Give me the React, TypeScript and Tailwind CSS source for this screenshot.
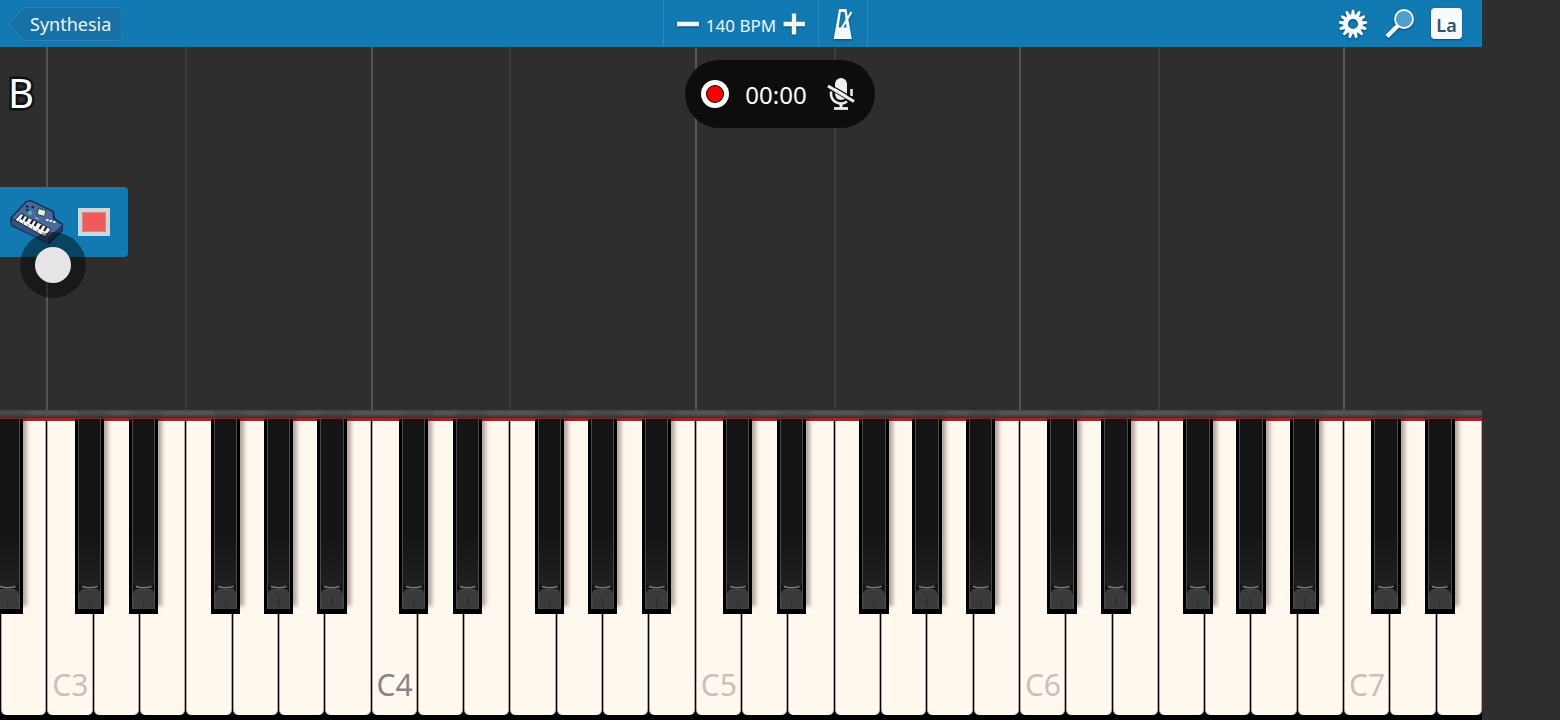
import React from "react";

const NATURALS = ["C", "D", "E", "F", "G", "A", "B"];

const SHARP_OFFSET: Record<string, string> = {
  C: "left-[60%]",
  D: "left-[77%]",
  F: "left-[54%]",
  G: "left-[69%]",
  A: "left-[85%]",
};

// 32 naturals, B2 up to E7
const KEYS = Array.from({ length: 32 }, (_, i) => {
  const step = i + 6;
  return { note: NATURALS[step % 7], octave: 2 + Math.floor(step / 7) };
});

const TEETH = Array.from({ length: 13 }, (_, i) => (i * 360) / 13);

function GearIcon() {
  return (
    <svg viewBox="0 0 32 32" className="size-8 drop-shadow-[0_1px_1px_rgba(0,0,0,0.4)]" aria-hidden="true">
      <g fill="#f6f9fb">
        {TEETH.map((a) => (
          <path key={a} d="M13.8 8 L14.8 2.2 Q16 0.8 17.2 2.2 L18.2 8 Z" transform={`rotate(${a} 16 16)`} />
        ))}
      </g>
      <circle cx="16" cy="16" r="7.4" fill="none" stroke="#f6f9fb" strokeWidth="4.6" />
    </svg>
  );
}

function SearchIcon() {
  return (
    <svg viewBox="0 0 32 32" className="size-8 drop-shadow-[0_1px_1px_rgba(0,0,0,0.4)]" aria-hidden="true">
      <path d="M14.5 17 L3 28.5" stroke="#f6f9fb" strokeWidth="4.4" />
      <circle cx="20" cy="11" r="9" fill="#4f9fcb" stroke="#f6f9fb" strokeWidth="1.8" />
    </svg>
  );
}

function MetronomeIcon() {
  return (
    <svg viewBox="0 0 24 32" className="h-8 w-6 drop-shadow-[0_1px_1px_rgba(0,0,0,0.4)]" aria-hidden="true">
      <path d="M8 1 H15.5 L20.8 31 H2.7 Z" fill="#f6f9fb" />
      <path d="M9.8 4 H13.6 L15.6 19.5 H7.6 Z" fill="#117ab2" />
      <path d="M10.5 20.5 L20.5 4" stroke="#f6f9fb" strokeWidth="2.2" />
    </svg>
  );
}

function MicOffIcon() {
  return (
    <svg viewBox="0 0 28 34" className="h-[34px] w-7" aria-hidden="true">
      <rect x="8" y="1" width="12" height="22" rx="6" fill="#ededed" />
      <path d="M4 14.5 V16 A10 10 0 0 0 20 24.500" fill="none" stroke="#ededed" strokeWidth="2.6" />
      <path d="M24.500 12 V19" stroke="#ededed" strokeWidth="2.600" />
      <path d="M14 26 V31" stroke="#ededed" strokeWidth="3" />
      <path d="M7 31.500 H21" stroke="#ededed" strokeWidth="2.800" />
      <path d="M0 10.500 L27.500 26.500" stroke="#0d0d0d" strokeWidth="1.400" />
      <path d="M1 6.500 L28 22" stroke="#0d0d0d" strokeWidth="1.400" />
      <path d="M1 9 L27 24.500" stroke="#ededed" strokeWidth="3.200" />
    </svg>
  );
}

function KeyboardIcon() {
  return (
    <svg viewBox="0 0 54 46" className="h-[46px] w-[54px]" aria-hidden="true">
      <path d="M0 19 L16 2 L21 1 L44 12 L45 19 L53 25 V32 L39 45 L1 27 Z" fill="#172c4c" />
      <path d="M2 19 L17 3 L21 2.5 L42.5 13 L43 20 L52 26 L38 39 Z" fill="#47699b" />
      <path d="M2 20 L38 39 V44 L2 26 Z" fill="#34527f" />
      <path d="M38 39 L52 27 V31 L38 44 Z" fill="#263f68" />
      <path d="M11 14.5 L41 30 L35 38 L5 21 Z" fill="#f4f4f0" stroke="#172c4c" strokeWidth="1" />
      <path
        d="M14 16.5 L11.500 20.500 M18 18.500 L15.500 22.500 M23 21 L20.500 25 M27 23 L24.500 27 M32 26 L29.500 30 M36.500 28 L34 32"
        stroke="#1a1d28"
        strokeWidth="2.200"
      />
      <path d="M9.500 20.500 L8.500 23 M14 23 L13 25.500 M18.500 25 L17.500 28 M23 28 L22 30.500 M28 30.500 L27 33 M33 33 L32 35.500" stroke="#5b6272" strokeWidth="0.800" />
      <path d="M28.500 9.500 L36 11.500 L34.500 17.500 L27 15.500 Z" fill="#d9f5c5" stroke="#213a5e" strokeWidth="1" />
      <circle cx="20" cy="14" r="2.200" fill="#45b98d" />
      <path d="M16 7 L18.500 8 M21.500 7.500 L24 8.500 M16 10.500 L18.500 11.500" stroke="#172c4c" strokeWidth="2.400" />
      <path d="M36 21 H38.500 M39.500 22 H42 M43 23 H45.500" stroke="#dfe7f3" strokeWidth="2.200" />
      <path d="M25 18.500 L29 20" stroke="#a7bad8" strokeWidth="1" />
    </svg>
  );
}

function BackShape() {
  return (
    <svg viewBox="0 0 114 34" preserveAspectRatio="none" className="absolute inset-0 h-full w-full" aria-hidden="true">
      <path
        d="M1 17 L13 3 Q15 0.5 18 0.5 H110 Q113.500 0.500 113.500 4 V30 Q113.500 33.500 110 33.500 H18 Q15 33.500 13 31 Z"
        fill="#1871a4"
        stroke="#2a86b8"
        strokeWidth="1"
      />
    </svg>
  );
}

function Header() {
  return (
    <header className="grid h-[47px] shrink-0 grid-cols-[1fr_auto_1fr] bg-[#117ab2] text-[#eef6fb]">
      <div className="flex items-center pl-2">
        <button type="button" className="relative h-[34px] pr-[11px] pl-[22px] text-lg leading-8">
          <BackShape />
          <span className="relative">Synthesia</span>
        </button>
      </div>
      <div className="flex items-center gap-1 border-x border-[#2d8abc] px-3">
        <button type="button" aria-label="Decrease tempo">
          <svg viewBox="0 0 24 24" className="size-6 drop-shadow-[0_1px_1px_rgba(0,0,0,0.4)]" aria-hidden="true">
            <path d="M1 12 H23" stroke="#f6f9fb" strokeWidth="4.500" />
          </svg>
        </button>
        <output className="w-[74px] pt-1 text-center text-[17px] leading-6 whitespace-nowrap">140 BPM</output>
        <button type="button" aria-label="Increase tempo">
          <svg viewBox="0 0 24 24" className="size-6 drop-shadow-[0_1px_1px_rgba(0,0,0,0.4)]" aria-hidden="true">
            <path d="M1.500 12 H23 M12 1.500 V22.500" stroke="#f6f9fb" strokeWidth="4.400" />
          </svg>
        </button>
      </div>
      <div className="flex justify-between">
        <button type="button" aria-label="Metronome" className="flex w-[49px] items-center justify-center border-r border-[#2d8abc]">
          <MetronomeIcon />
        </button>
        <div className="flex items-center gap-[15px] pr-5">
          <button type="button" aria-label="Settings">
            <GearIcon />
          </button>
          <button type="button" aria-label="Zoom">
            <SearchIcon />
          </button>
          <button
            type="button"
            aria-pressed="true"
            className="flex size-[31px] items-end justify-center rounded-[4px] bg-[#f8fbfd] text-lg leading-7 font-semibold text-[#2b5573] shadow-[0_1px_2px_rgba(0,0,0,0.4)]"
          >
            La
          </button>
        </div>
      </div>
    </header>
  );
}

function Lanes() {
  return (
    <div className="absolute inset-0 grid grid-cols-32" aria-hidden="true">
      {KEYS.map(({ note, octave }) => (
        <div
          key={note + octave}
          className={
            note === "C" ? "border-l-2 border-[#555555]" : note === "F" ? "border-l-2 border-[#3d3d3d]" : ""
          }
        />
      ))}
    </div>
  );
}

function BlackKey({ position }: { position: string }) {
  return (
    <div
      className={`absolute -top-0.5 z-10 h-[195px] w-[65%] bg-black px-[3px] pb-[5px] shadow-[4px_-8px_4px_rgba(60,50,45,0.4)] ${position}`}
    >
      <div className="flex h-full flex-col border-x border-[#4a4a4a] bg-linear-to-b from-[#141414] from-60% to-[#262626]">
        <div className="flex-1" />
        <svg viewBox="0 0 22 26" preserveAspectRatio="none" className="h-[26px] w-full" aria-hidden="true">
          <path d="M0 0 L4 4 Q11 6 18 4 L22 0 V26 H0 Z" fill="#151515" />
          <path d="M3 3.500 Q11 6 19 3.500" fill="none" stroke="#7b7b7b" strokeWidth="1.500" />
          <path d="M0 26 V13 Q1 6.500 5 6.500 H17 Q21 6.500 22 13 V26 Z" fill="#3a3a3a" stroke="#4c4c4c" strokeWidth="0.800" />
          <path d="M11 14 V24" stroke="#2a2a2a" strokeWidth="1" />
        </svg>
      </div>
    </div>
  );
}

function Keyboard() {
  return (
    <section aria-label="Piano" className="shrink-0 overflow-hidden bg-black">
      <div className="h-[7px] bg-linear-to-b from-[#4a4a4a] via-[#565656] to-[#3a3a3a]" />
      <div className="h-1 border-t border-[#5c2222] bg-[#a02525]" />
      <div className="grid h-[294px] grid-cols-32">
        {KEYS.map(({ note, octave }) => (
          <div key={note + octave} className="relative border-l border-black">
            <div className="flex h-full items-end rounded-b-[5px] border-x border-[#b3aba2] bg-[#fff8ef] pb-3 pl-1">
              {note === "C" && (
                <span
                  className={
                    octave === 4
                      ? "text-3xl leading-9 text-[#8b837d]"
                      : "text-3xl leading-9 text-[#c9c1b9]"
                  }
                >
                  {note + octave}
                </span>
              )}
            </div>
            {octave === 2 && <BlackKey position="left-[-17%]" />}
            {SHARP_OFFSET[note] && <BlackKey position={SHARP_OFFSET[note]} />}
          </div>
        ))}
      </div>
      <div className="h-[5px] bg-black" />
    </section>
  );
}

function RecordingPill() {
  return (
    <div className="absolute top-[60px] left-1/2 z-20 flex h-[68px] w-[190px] -translate-x-1/2 items-center rounded-full bg-[#0d0d0d] pr-5 pl-4 text-white">
      <button
        type="button"
        aria-label="Stop recording"
        className="flex size-7 items-center justify-center rounded-full border-[5px] border-white bg-black"
      >
        <span className="size-4 rounded-full bg-[#fb0000]" />
      </button>
      <time className="flex-1 pt-0.5 pr-1 text-center text-2xl leading-8">00:00</time>
      <button type="button" aria-label="Microphone off">
        <MicOffIcon />
      </button>
    </div>
  );
}

export default function App() {
  return (
    <div className='relative min-h-screen bg-[#2e2e2e] font-["Noto_Sans",sans-serif]'>
      <main className="flex min-h-screen w-[95%] flex-col overflow-hidden">
        <Header />
        <section className="relative flex-1">
          <Lanes />
          <div className="relative flex flex-col items-start pt-5">
            <p className="pl-2 text-[40px] leading-[52px] text-white [paint-order:stroke_fill] [-webkit-text-stroke:5px_#111111] [stroke-linejoin:round]">
              B
            </p>
            <div className="relative mt-[68px] flex h-[70px] w-32 items-center gap-[14px] rounded-r-[4px] bg-[#117ab2] pl-[10px]">
              <button type="button" aria-label="Instrument">
                <KeyboardIcon />
              </button>
              <button
                type="button"
                aria-label="Stop"
                className="h-7 w-8 border-4 border-[#cfd6d9] bg-[#f25a5a] shadow-[inset_0_0_0_1px_#d08a8a]"
              />
              <div className="absolute top-[45px] left-5 flex size-[66px] items-center justify-center rounded-full bg-black/45">
                <span className="size-9 rounded-full bg-[#e6e4e6]" />
              </div>
            </div>
          </div>
        </section>
        <Keyboard />
      </main>
      <RecordingPill />
    </div>
  );
}
